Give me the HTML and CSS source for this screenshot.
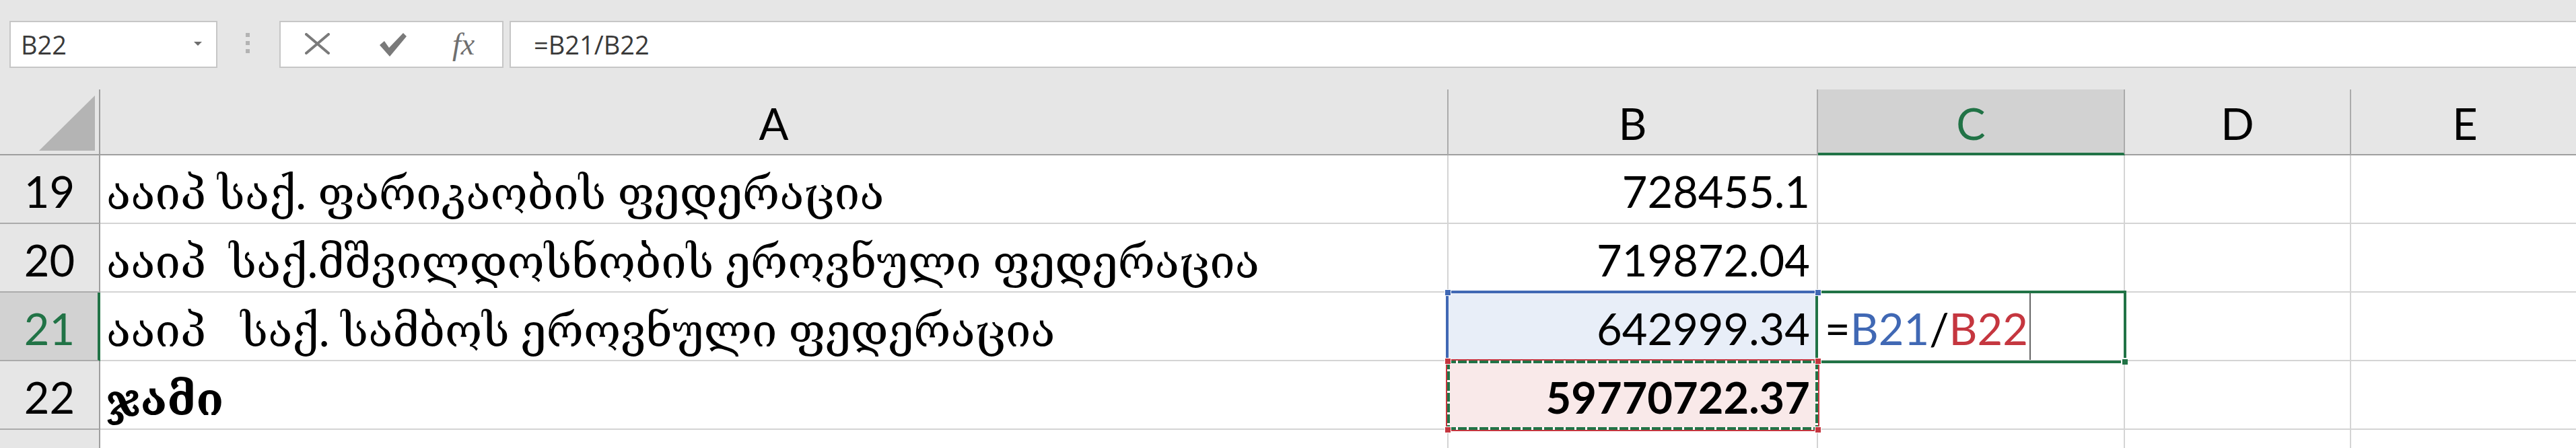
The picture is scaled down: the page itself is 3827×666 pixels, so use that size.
FILE: index.html
```html
<!DOCTYPE html>
<html lang="ka">
<head>
<meta charset="utf-8">
<title>Excel – B22</title>
<link rel="stylesheet" href="styles.css">
</head>
<body>
<div class="app">
  <div class="fbar">
    <div class="namebox"><span class="nb-text">B22</span><span class="nb-arrow"></span></div>
    <div class="grip"><i></i><i></i><i></i></div>
    <div class="btns">
      <svg class="ic-x" viewBox="0 0 37 32" aria-hidden="true"><path d="M2 2 L35 30 M35 2 L2 30" stroke="#7a7a7a" stroke-width="4" stroke-linecap="round" fill="none"/></svg>
      <svg class="ic-ok" viewBox="0 0 42 38" aria-hidden="true"><path d="M1 19 L8 13 L15 23 L36 1 L41 6 L16 36 Z" fill="#7a7a7a"/></svg>
      <span class="ic-fx">fx</span>
    </div>
    <div class="formula">=B21/B22</div>
  </div>

  <div class="sheet">
    <div class="corner"><svg class="tri" viewBox="0 0 83 82" aria-hidden="true"><polygon points="83,0 83,82 0,82" fill="#b4b4b4"/></svg></div>
    <div class="ch">A</div>
    <div class="ch">B</div>
    <div class="ch ch-sel">C</div>
    <div class="ch">D</div>
    <div class="ch">E</div>

    <div class="rh">19</div>
    <div class="c ka">ააიპ საქ. ფარიკაობის ფედერაცია</div>
    <div class="c num">728455.1</div>
    <div class="c"></div><div class="c"></div><div class="c"></div>

    <div class="rh">20</div>
    <div class="c ka">ააიპ  საქ.მშვილდოსნობის ეროვნული ფედერაცია</div>
    <div class="c num">719872.04</div>
    <div class="c"></div><div class="c"></div><div class="c"></div>

    <div class="rh rh-sel">21</div>
    <div class="c ka">ააიპ   საქ. სამბოს ეროვნული ფედერაცია</div>
    <div class="c num ref-b">642999.34<span class="rf rf-blue"></span><i class="hd hd-b tl"></i><i class="hd hd-b tr"></i></div>
    <div class="c edit"><span class="ftxt">=<span class="t-b">B21</span>/<span class="t-r">B22</span></span><span class="caret"></span><span class="sel"></span><i class="fill-h"></i></div>
    <div class="c"></div><div class="c"></div>

    <div class="rh">22</div>
    <div class="c ka bold">ჯამი</div>
    <div class="c num bold ref-r">59770722.37<span class="rf rf-red"><span class="ants"></span></span><i class="hd hd-r tl"></i><i class="hd hd-r tr"></i><i class="hd hd-r bl"></i><i class="hd hd-r br"></i></div>
    <div class="c"></div><div class="c"></div><div class="c"></div>

    <div class="rh"></div>
    <div class="c"></div><div class="c"></div><div class="c"></div><div class="c"></div><div class="c"></div>
  </div>
</div>
</body>
</html>
```

FILE: styles.css
```css
html, body {
  margin: 0;
  padding: 0;
}
body {
  width: 3827px;
  height: 666px;
  overflow: hidden;
  background: #ffffff;
  font-family: Lato, "DejaVu Serif", sans-serif;
  color: #000;
}

/* ---------- formula bar ---------- */
.fbar {
  height: 133px;
  box-sizing: border-box;
  background: #e6e6e6;
  display: flex;
  align-items: flex-start;
  padding: 31px 0 0 14px;
}
.namebox {
  width: 309px;
  height: 70px;
  box-sizing: border-box;
  border: 2px solid #c6c6c6;
  background: #fff;
  display: flex;
  align-items: center;
  padding: 0 21px 0 15px;
  font-family: "Open Sans", sans-serif;
  font-size: 38px;
  color: #3a3a3a;
}
.nb-text { flex: 1; }
.nb-arrow {
  width: 0;
  height: 0;
  border-left: 6px solid transparent;
  border-right: 6px solid transparent;
  border-top: 6px solid #6d6d6d;
  margin-top: -2px;
}
.grip {
  display: flex;
  flex-direction: column;
  gap: 6px;
  margin: 18px 0 0 42px;
}
.grip i {
  display: block;
  width: 6px;
  height: 6px;
  background: #b3b3b3;
}
.btns {
  margin-left: 44px;
  width: 333px;
  height: 70px;
  box-sizing: border-box;
  border: 2px solid #c6c6c6;
  background: #fff;
  display: flex;
  align-items: center;
  padding-left: 36px;
}
.ic-x { width: 37px; height: 32px; display: block; margin-top: -2px; }
.ic-ok { width: 42px; height: 38px; display: block; margin-left: 73px; margin-top: 2px; }
.ic-fx {
  margin-left: 67px;
  font-family: "Liberation Serif", serif;
  font-style: italic;
  font-size: 46px;
  color: #6f6f6f;
  line-height: 1;
}
.formula {
  margin-left: 9px;
  flex: 1;
  height: 70px;
  box-sizing: border-box;
  border: 2px solid #c6c6c6;
  border-right: 0;
  background: #fff;
  display: flex;
  align-items: center;
  padding-left: 34px;
  font-family: "Open Sans", sans-serif;
  font-size: 38px;
  color: #3a3a3a;
}

/* ---------- sheet grid ---------- */
.sheet {
  display: grid;
  grid-template-columns: 149px 2003px 549px 456px 336px 340px;
  grid-template-rows: 98px 102px 102px 102px 102px 40px;
  background: #fff;
}
.corner {
  background: #e6e6e6;
  border-right: 2px solid #9e9e9e;
  border-bottom: 2px solid #9e9e9e;
  box-sizing: border-box;
  padding: 9px 0 0 58px;
}
.tri { width: 83px; height: 82px; display: block; }

.ch {
  background: #e6e6e6;
  border-right: 2px solid #ababab;
  border-bottom: 2px solid #9e9e9e;
  box-sizing: border-box;
  display: flex;
  justify-content: center;
  align-items: flex-end;
  padding-bottom: 13px;
  font-size: 65px;
  line-height: 65px;
}
.ch-sel {
  background: #d2d2d2;
  color: #217346;
  border-bottom: 4px solid #217346;
  padding-bottom: 11px;
}

.rh {
  background: #e6e6e6;
  border-right: 2px solid #9e9e9e;
  border-bottom: 2px solid #ababab;
  box-sizing: border-box;
  display: flex;
  justify-content: center;
  align-items: flex-end;
  padding-bottom: 14px;
  font-size: 65px;
  line-height: 65px;
}
.rh-sel {
  background: #d2d2d2;
  color: #217346;
  border-right: 4px solid #217346;
  padding-left: 2px;
}

.c {
  position: relative;
  border-right: 2px solid #d4d4d4;
  border-bottom: 2px solid #d4d4d4;
  box-sizing: border-box;
  display: flex;
  align-items: flex-end;
  padding: 0 10px 14px 10px;
  font-size: 65px;
  line-height: 65px;
  white-space: pre;
  overflow: visible;
}
.num { justify-content: flex-end; }
.bold { font-weight: 700; }
.ka {
  font-size: 67px;
  padding-left: 9px;
  padding-bottom: 13px;
}

/* referenced ranges */
.ref-b { background: #e8eef8; }
.ref-r { background: #f9e9e9; }
.rf {
  position: absolute;
  box-sizing: border-box;
  pointer-events: none;
}
.rf-blue {
  left: -4px;
  top: -3px;
  right: 0;
  bottom: 0;
  border-top: 4px solid #4068b4;
  border-left: 4px solid #4068b4;
  z-index: 2;
}
.rf-red {
  left: -4px;
  top: -3px;
  right: -4px;
  bottom: -4px;
  border: 2px solid #c5363f;
  z-index: 2;
}
.ants {
  position: absolute;
  inset: 0;
  background:
    repeating-linear-gradient(90deg, #217346 0 13px, #fff 13px 16px) left top / 100% 4px no-repeat,
    repeating-linear-gradient(90deg, #217346 0 13px, #fff 13px 16px) left bottom / 100% 4px no-repeat,
    repeating-linear-gradient(180deg, #217346 0 13px, #fff 13px 16px) left top / 4px 100% no-repeat,
    repeating-linear-gradient(180deg, #217346 0 13px, #fff 13px 16px) right top / 4px 100% no-repeat;
}
.hd {
  position: absolute;
  width: 10px;
  height: 10px;
  box-sizing: border-box;
  border: 1px solid #fff;
  z-index: 5;
}
.hd-b { background: #4068b4; }
.hd-r { background: #c5363f; }
.hd.tl { left: -6px; top: -5px; }
.hd.tr { right: -7px; top: -5px; }
.hd.bl { left: -6px; bottom: -7px; }
.hd.br { right: -7px; bottom: -7px; }

/* cell in edit mode */
.edit { padding-right: 0; }
.t-b { color: #4068b4; }
.t-r { color: #c5363f; }
.caret {
  align-self: stretch;
  width: 2px;
  margin: 1px 0 -14px 2px;
  background: #666;
}
.sel {
  position: absolute;
  left: -4px;
  top: -3px;
  right: -4px;
  bottom: -5px;
  border: 4px solid #217346;
  z-index: 3;
  pointer-events: none;
}
.fill-h {
  position: absolute;
  right: -6px;
  bottom: -7px;
  width: 10px;
  height: 10px;
  box-sizing: border-box;
  background: #217346;
  border-left: 2px solid #fff;
  border-top: 2px solid #fff;
  z-index: 4;
}
```
